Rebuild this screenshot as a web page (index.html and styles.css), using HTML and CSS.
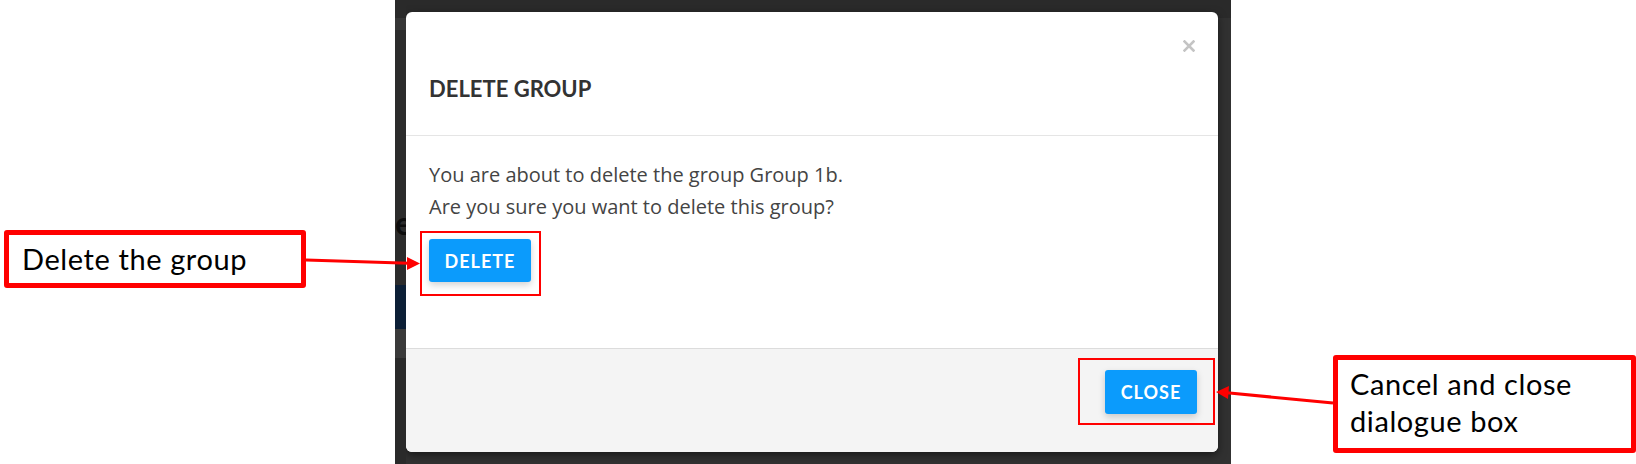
FILE: index.html
```html
<!DOCTYPE html>
<html lang="en">
<head>
<meta charset="utf-8">
<title>Delete group</title>
<link rel="stylesheet" href="styles.css">
</head>
<body>
<div class="page">
  <div class="side side-left">
    <div class="note note-left">Delete the group</div>
  </div>
  <div class="backdrop">
    <div class="gutter"><span class="peek">e</span></div>
    <div class="modal">
      <div class="m-header">
        <button class="x" aria-label="Close">
          <svg width="12" height="12" viewBox="0 0 12 12"><path d="M1.5 1.5 L10.5 10.5 M10.5 1.5 L1.5 10.5" stroke="#c4c4c4" stroke-width="2.6" stroke-linecap="square"/></svg>
        </button>
        <h4 class="title">DELETE GROUP</h4>
      </div>
      <div class="m-body">
        <p class="msg">You are about to delete the group Group 1b.<br>Are you sure you want to delete this group?</p>
        <div class="hl hl-delete"><button class="btn btn-delete">DELETE</button></div>
      </div>
      <div class="m-footer">
        <div class="hl hl-close"><button class="btn btn-close">CLOSE</button></div>
      </div>
    </div>
  </div>
  <div class="side side-right">
    <div class="note note-right">Cancel and close<br>dialogue box</div>
  </div>
  <svg class="arrows" width="1636" height="464" viewBox="0 0 1636 464">
    <line x1="306" y1="260" x2="409" y2="263.3" stroke="#ff0000" stroke-width="3"/>
    <polygon points="420,263.6 407,257 407,270" fill="#ff0000"/>
    <line x1="1333" y1="403" x2="1227" y2="392.8" stroke="#ff0000" stroke-width="3"/>
    <polygon points="1216,392 1229,386 1228,399" fill="#ff0000"/>
  </svg>
</div>
</body>
</html>
```
FILE: styles.css
```css
* { box-sizing: border-box; }
html, body { margin: 0; padding: 0; background: #ffffff; }
.page {
  position: relative;
  width: 1636px;
  height: 464px;
  display: grid;
  grid-template-columns: 395px 836px 405px;
  overflow: hidden;
}
.side { height: 464px; }
.note {
  border: 5px solid #ff0000;
  border-radius: 3px;
  background: #ffffff;
  color: #000000;
  font-family: Lato, "Liberation Sans", sans-serif;
  font-size: 29px;
  letter-spacing: 0.6px;
  white-space: nowrap;
}
.note-left {
  margin: 230px 0 0 4px;
  width: 302px;
  height: 58px;
  padding: 6px 0 0 13px;
  line-height: 36px;
}
.note-right {
  margin: 355px 0 0 102px;
  width: 303px;
  height: 98px;
  padding: 5px 0 0 12px;
  line-height: 37px;
}
.backdrop {
  display: flex;
  padding: 12px 13px 12px 0;
  background: linear-gradient(#2a2a2a 0, #2a2a2a 18px, #313131 18px);
}
.gutter {
  position: relative;
  width: 11px;
  margin: -12px 0;
  background: linear-gradient(#2a2a2a 0, #2a2a2a 18px, #363636 18px, #363636 30px, #2c2c2c 30px, #2c2c2c 285px, #0c1f36 285px, #0c1f36 329px, #3a3a3a 329px, #3a3a3a 358px, #2a2a2a 358px);
  overflow: hidden;
}
.peek {
  position: absolute;
  left: 0;
  top: 203px;
  font-family: Lato, sans-serif;
  font-weight: 700;
  font-size: 32px;
  color: #0d0d0d;
}
.modal {
  flex: 1;
  display: flex;
  flex-direction: column;
  background: #ffffff;
  border-radius: 6px;
  box-shadow: 0 3px 9px rgba(0, 0, 0, 0.5);
}
.m-header {
  height: 124px;
  padding: 28px 23px 0 23px;
  border-bottom: 1px solid #e5e5e5;
}
.x {
  display: block;
  margin: 0 0 0 auto;
  padding: 0;
  border: 0;
  background: none;
  width: 12px;
  height: 12px;
  line-height: 0;
}
.x svg { display: block; }
.title {
  margin: 23px 0 0 0;
  font-family: Lato, "Liberation Sans", sans-serif;
  font-weight: 700;
  font-size: 22px;
  line-height: normal;
  color: #333333;
}
.m-body {
  flex: 1;
  padding: 23px 23px 0 23px;
}
.msg {
  margin: 0;
  font-family: "Open Sans", "Liberation Sans", sans-serif;
  font-size: 20px;
  line-height: 32px;
  color: #444444;
}
.hl {
  display: flex;
  width: fit-content;
  border: 2px solid #ff0000;
}
.hl-delete {
  margin: 8px 0 0 -9px;
  padding: 6px 8px 12px 7px;
}
.m-footer {
  height: 104px;
  display: flex;
  justify-content: flex-end;
  align-items: flex-start;
  padding: 9px 3px 0 0;
  border-top: 1px solid #dcdcdc;
  background: #f4f4f4;
  border-radius: 0 0 6px 6px;
}
.hl-close {
  padding: 10px 16px 9px 25px;
}
.btn {
  display: flex;
  align-items: center;
  justify-content: center;
  height: 43px;
  padding: 0;
  border: 0;
  border-radius: 3px;
  background: #0b9bfc;
  color: #ffffff;
  font-family: Lato, "Liberation Sans", sans-serif;
  font-weight: 700;
  font-size: 18px;
  letter-spacing: 1px;
  line-height: normal;
  box-shadow: 0 3px 7px rgba(0, 0, 0, 0.18);
}
.btn-delete { width: 102px; }
.btn-close { width: 92px; height: 44px; }
.arrows {
  position: absolute;
  left: 0;
  top: 0;
  pointer-events: none;
}
```
